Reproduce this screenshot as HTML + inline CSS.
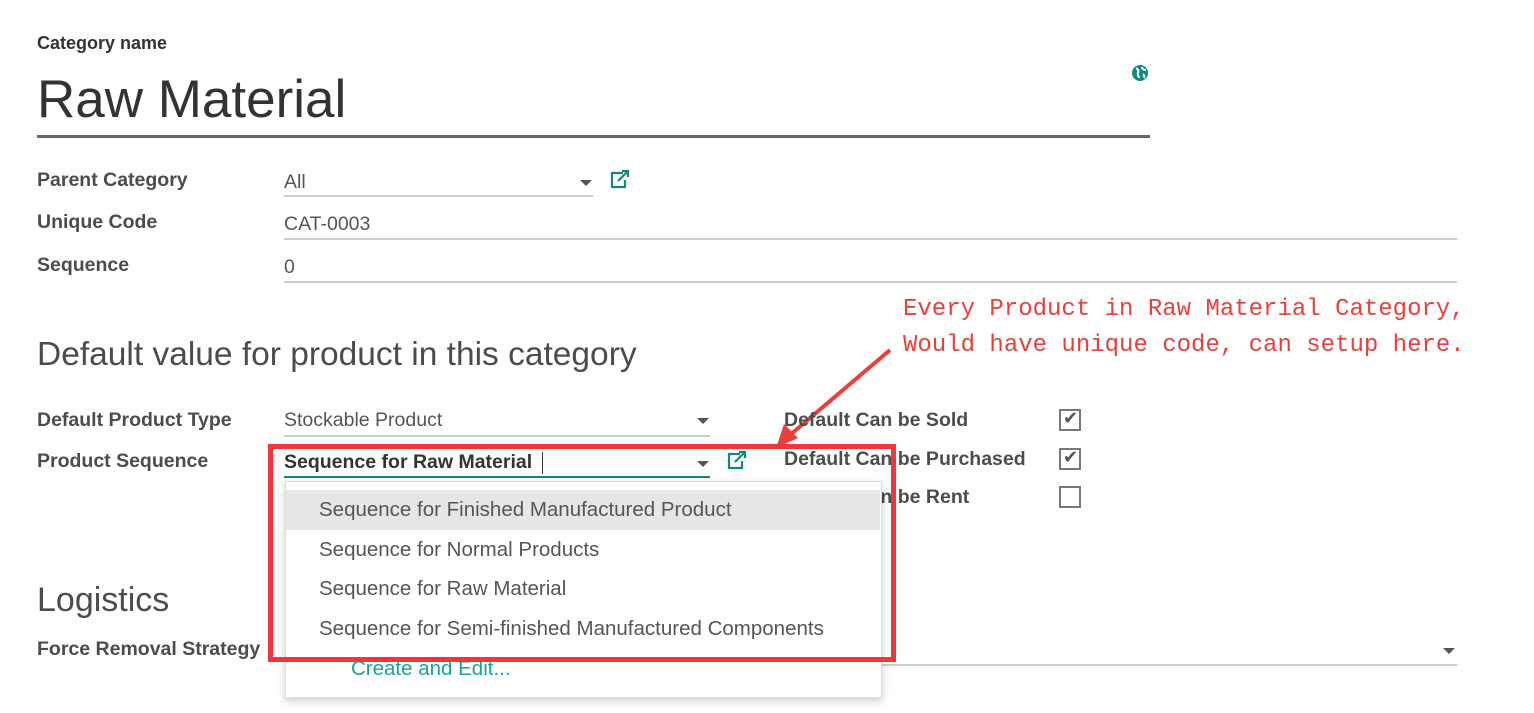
<!DOCTYPE html>
<html><head><meta charset="utf-8"><style>
body{margin:0;width:1534px;height:713px;background:#fff;position:relative;overflow:hidden;font-family:"Liberation Sans",sans-serif;color:#4c4c4c}
.a{position:absolute;white-space:nowrap}
.lb{font-weight:bold;font-size:19.5px;color:#4c4c4c}
.v{font-size:19.5px;color:#555}
.ln{position:absolute;height:2px;background:#ccc}
.cb{position:absolute;border:2px solid #777;box-sizing:border-box;width:22px;height:22px}
.cb span{position:absolute;left:2px;top:-3px;font-size:18px;color:#555}
.tri{position:absolute;width:0;height:0;border-left:6px solid transparent;border-right:6px solid transparent;border-top:6px solid #555}
.it{position:absolute;left:319px;font-size:20.5px;color:#555}
</style></head><body>
<div class="a lb" style="left:37px;top:33px;font-size:18px;color:#333">Category name</div>
<div class="a" style="left:37px;top:69px;font-size:53px;color:#333">Raw Material</div>
<div class="ln" style="left:37px;top:135px;width:1113px;height:3px;background:#666"></div>
<svg class="a" style="left:1131px;top:64px" width="18" height="18" viewBox="0 0 18 18"><circle cx="9" cy="9" r="8" fill="#0f8a80"/><path d="M5 4c2 1 3 3 2 5s1 3 1 5M11 3c0 2 2 3 4 3M12 10c1 1 2 2 1 4" stroke="#fff" stroke-width="2" fill="none"/></svg>

<div class="a lb" style="left:37px;top:169px">Parent Category</div>
<div class="a v" style="left:284px;top:171px">All</div>
<div class="tri" style="left:580px;top:180px"></div>
<div class="ln" style="left:284px;top:195px;width:309px"></div>
<svg class="a" style="left:609px;top:169px" width="22" height="20" viewBox="0 0 22 20"><path d="M14 4H3v14h13v-7" stroke="#0f8a80" stroke-width="2.2" fill="none"/><path d="M9 12l10-10M13 2h6v6" stroke="#0f8a80" stroke-width="2.2" fill="none"/></svg>

<div class="a lb" style="left:37px;top:211px">Unique Code</div>
<div class="a v" style="left:284px;top:213px">CAT-0003</div>
<div class="ln" style="left:284px;top:238px;width:1173px"></div>
<div class="a lb" style="left:37px;top:254px">Sequence</div>
<div class="a v" style="left:284px;top:256px">0</div>
<div class="ln" style="left:284px;top:281px;width:1173px"></div>

<div class="a" style="left:903px;top:292px;font-family:'Liberation Mono',monospace;font-size:24px;color:#e8403a;line-height:36px">Every Product in Raw Material Category,<br>Would have unique code, can setup here.</div>
<svg class="a" style="left:0;top:0" width="1534" height="713"><path d="M890 350L790 435" stroke="#e8403a" stroke-width="4"/><path d="M776 448l8-24 14 14z" fill="#e8403a"/></svg>

<div class="a" style="left:37px;top:336px;font-size:33.5px;color:#4c4c4c">Default value for product in this category</div>

<div class="a lb" style="left:37px;top:409px">Default Product Type</div>
<div class="a v" style="left:284px;top:409px">Stockable Product</div>
<div class="tri" style="left:697px;top:418px"></div>
<div class="ln" style="left:284px;top:435px;width:426px"></div>
<div class="a lb" style="left:37px;top:450px">Product Sequence</div>
<div class="a" style="left:284px;top:451px;color:#333;font-weight:bold;font-size:19.5px">Sequence for Raw Material</div>
<div class="a" style="left:542px;top:452px;width:1px;height:22px;background:#333"></div>
<div class="tri" style="left:697px;top:461px"></div>
<div class="ln" style="left:284px;top:476px;width:426px;background:#0f8a80"></div>
<svg class="a" style="left:726px;top:450px" width="22" height="20" viewBox="0 0 22 20"><path d="M14 4H3v14h13v-7" stroke="#0f8a80" stroke-width="2.2" fill="none"/><path d="M9 12l10-10M13 2h6v6" stroke="#0f8a80" stroke-width="2.2" fill="none"/></svg>

<div class="a lb" style="left:784px;top:409px">Default Can be Sold</div>
<div class="a lb" style="left:784px;top:448px">Default Can be Purchased</div>
<div class="a lb" style="left:784px;top:486px">Default Can be Rent</div>
<div class="cb" style="left:1059px;top:409px"><span>✔</span></div>
<div class="cb" style="left:1059px;top:448px"><span>✔</span></div>
<div class="cb" style="left:1059px;top:486px"></div>

<div class="a" style="left:37px;top:581px;font-size:34px">Logistics</div>
<div class="a lb" style="left:37px;top:638px">Force Removal Strategy</div>
<div class="ln" style="left:880px;top:664px;width:577px"></div>
<div class="tri" style="left:1443px;top:648px"></div>

<div class="a" style="left:285px;top:481px;width:595px;height:215px;background:#fff;border:1px solid #ddd;box-shadow:0 3px 8px rgba(0,0,0,.2)"></div>
<div class="a" style="left:286px;top:490px;width:594px;height:40px;background:#e6e6e6"></div>
<div class="it" style="top:498px">Sequence for Finished Manufactured Product</div>
<div class="it" style="top:538px">Sequence for Normal Products</div>
<div class="it" style="top:577px">Sequence for Raw Material</div>
<div class="it" style="top:617px">Sequence for Semi-finished Manufactured Components</div>
<div class="a" style="left:351px;top:657px;font-size:20.5px;color:#1aa39a">Create and Edit...</div>

<div class="a" style="left:268px;top:444px;width:618px;height:208px;border:5px solid #f0363a"></div>
</body></html>
